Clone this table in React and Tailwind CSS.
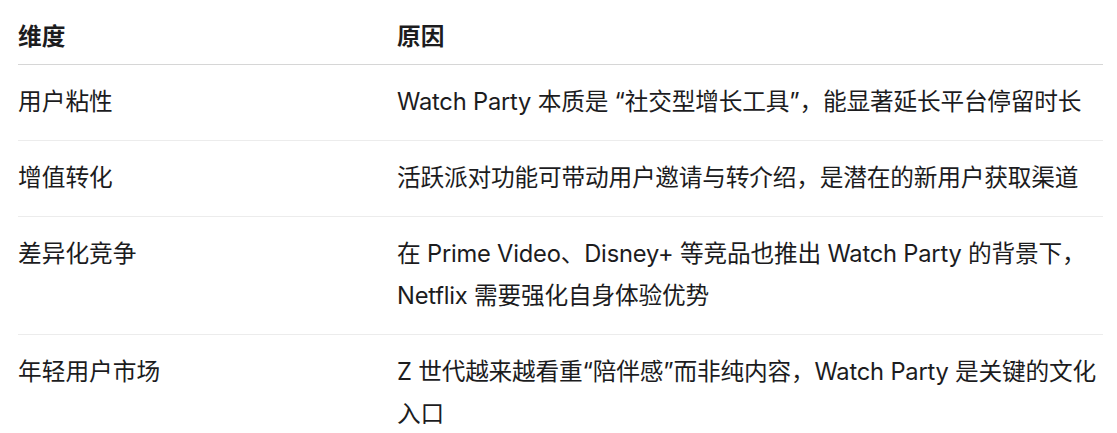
const rows = [
  {
    dim: '用户粘性',
    reason: 'Watch Party 本质是 “社交型增长工具”，能显著延长平台停留时长',
  },
  {
    dim: '增值转化',
    reason: '活跃派对功能可带动用户邀请与转介绍，是潜在的新用户获取渠道',
  },
  {
    dim: '差异化竞争',
    reason: '在 Prime Video、Disney+ 等竞品也推出 Watch Party 的背景下，Netflix 需要强化自身体验优势',
  },
  {
    dim: '年轻用户市场',
    reason: 'Z 世代越来越看重“陪伴感”而非纯内容，Watch Party 是关键的文化入口',
  },
];

export default function App() {
  return (
    <div
      className="bg-white w-[1117px] h-[433px] overflow-hidden pl-[18px] text-[#1c1c1e] text-[23.7px] leading-[42px]"
      style={{ fontFamily: 'Inter, "Noto Sans CJK SC", sans-serif' }}
    >
      <div className="w-[1085px]">
        {/* Header */}
        <div className="grid grid-cols-[379px_1fr] pt-[16px] pb-[6px] border-b border-[#d6d6d6] font-semibold">
          <div>维度</div>
          <div>原因</div>
        </div>

        {rows.map((r, i) => (
          <div
            key={r.dim}
            className={
              'grid grid-cols-[379px_1fr] pt-[16px] pb-[17px] ' +
              (i < rows.length - 1 ? 'border-b border-[#ececec]' : '')
            }
          >
            <div>{r.dim}</div>
            <div className="tracking-[-0.2px]">{r.reason}</div>
          </div>
        ))}
      </div>
    </div>
  );
}
